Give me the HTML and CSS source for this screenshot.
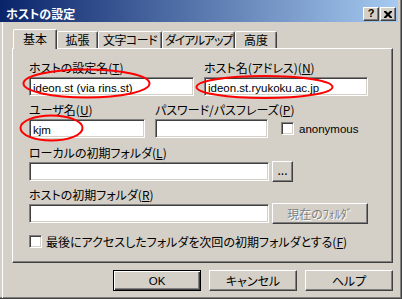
FILE: index.html
```html
<!DOCTYPE html>
<html lang="ja">
<head>
<meta charset="utf-8">
<title>ホストの設定</title>
<link rel="stylesheet" href="styles.css">
</head>
<body>
<div class="win">
  <div class="title">
    <span class="title-text">ホストの設定</span>
    <div class="tbtns">
      <span class="tbtn help">?</span>
      <span class="tbtn"><svg width="8" height="7" viewBox="0 0 8 7"><path d="M0 0h2l2 2 2-2h2v1L5.5 3.5 8 6v1H6L4 5 2 7H0V6l2.5-2.5L0 1z" fill="#000"/></svg></span>
    </div>
  </div>
  <div class="main">
    <div class="tabs">
      <div class="tab active t-basic">基本</div>
      <div class="tab t-ext">拡張</div>
      <div class="tab t-code">文字コード</div>
      <div class="tab t-dial">ダイアルアップ</div>
      <div class="tab t-adv">高度</div>
    </div>
    <div class="panel">
      <div class="row r1">
        <div class="field f-name">
          <div class="label">ホストの設定名(<u>T</u>)</div>
          <div class="ctl"><div class="input"><span class="latin">ideon.st (via rins.st)</span></div></div>
        </div>
        <div class="field f-host">
          <div class="label">ホスト名(アドレス)(<u>N</u>)</div>
          <div class="ctl"><div class="input"><span class="latin">ideon.st.ryukoku.ac.jp</span></div></div>
        </div>
      </div>
      <div class="row r2">
        <div class="field f-user">
          <div class="label">ユーザ名(<u>U</u>)</div>
          <div class="ctl"><div class="input"><span class="latin">kjm</span></div></div>
        </div>
        <div class="field f-pass">
          <div class="label">パスワード/パスフレーズ(<u>P</u>)</div>
          <div class="ctl"><div class="input"></div></div>
        </div>
        <div class="field f-anon">
          <div class="label"></div>
          <div class="ctl"><span class="check"></span><span class="check-label latin">anonymous</span></div>
        </div>
      </div>
      <div class="row r3">
        <div class="field f-wide">
          <div class="label">ローカルの初期フォルダ(<u>L</u>)</div>
          <div class="ctl"><div class="input wide"></div><div class="btn dots">...</div></div>
        </div>
      </div>
      <div class="row r4">
        <div class="field f-wide">
          <div class="label">ホストの初期フォルダ(<u>R</u>)</div>
          <div class="ctl"><div class="input wide"></div><div class="btn cur disabled">現在のﾌｫﾙﾀﾞ</div></div>
        </div>
      </div>
      <div class="row r5">
        <span class="check"></span><span class="check-label">最後にアクセスしたフォルダを次回の初期フォルダとする(<u>F</u>)</span>
      </div>
    </div>
    <div class="buttons">
      <div class="btn big default"><span class="latin">OK</span></div>
      <div class="btn big">キャンセル</div>
      <div class="btn big">ヘルプ</div>
    </div>
  </div>
  <svg class="marks" width="402" height="299" viewBox="0 0 402 299">
    <ellipse cx="86.5" cy="83.5" rx="63" ry="14" />
    <ellipse cx="264.5" cy="87" rx="68" ry="11" />
    <ellipse cx="51.5" cy="128" rx="31" ry="12.5" />
  </svg>
</div>
</body>
</html>
```
FILE: styles.css
```css
* { box-sizing: border-box; }
html, body { margin: 0; padding: 0; }
body {
  width: 402px;
  height: 299px;
  overflow: hidden;
  background: #d4d0c8;
  font-family: "Noto Sans CJK JP", "Noto Sans", sans-serif;
  font-size: 12px;
  color: #000;
  font-feature-settings: "palt";
}
u { text-decoration: underline; text-underline-offset: 1px; }
.latin { font-family: "Liberation Sans", "Noto Sans CJK JP", sans-serif; font-size: 11.5px; }

.win {
  position: relative;
  width: 402px;
  height: 299px;
  background: #d4d0c8;
  border-right: 1px solid #404040;
  border-bottom: 1px solid #404040;
  box-shadow: inset -1px -1px #808080;
  display: flex;
  flex-direction: column;
}

.title {
  width: 398px;
  height: 22px;
  flex: none;
  background: linear-gradient(to right, #0a246a, #a6caf0);
  display: flex;
  align-items: center;
  justify-content: space-between;
  padding: 6px 2px 0 6px;
}
.title-text {
  color: #fff;
  font-weight: bold;
  font-size: 12px;
  line-height: 14px;
}
.tbtns { display: flex; gap: 1px; }
.tbtn {
  width: 16px;
  height: 14px;
  background: #d4d0c8;
  border: 1px solid;
  border-color: #fff #404040 #404040 #fff;
  box-shadow: inset -1px -1px #808080;
  display: flex;
  align-items: center;
  justify-content: center;
}
.tbtn.help {
  font: bold 11px/1 "Liberation Sans", sans-serif;
  padding-bottom: 1px;
}

.main {
  flex: 1;
  margin-left: 2px;
  border-left: 1px solid #fff;
  padding: 7px 8px 0 9px;
  display: flex;
  flex-direction: column;
}

.tabs {
  display: flex;
  align-items: flex-end;
  height: 19px;
  padding-left: 1px;
  position: relative;
  z-index: 1;
}
.tab {
  height: 17px;
  border-top: 1px solid #fff;
  border-left: 1px solid #fff;
  border-right: 1px solid #404040;
  box-shadow: inset -1px 0 #808080;
  border-radius: 2px 2px 0 0;
  display: flex;
  justify-content: center;
  line-height: 15px;
  white-space: nowrap;
  background: #d4d0c8;
  flex: none;
}
.tab.active {
  height: 20px;
  margin-bottom: -1px;
  line-height: 17px;
}
.t-basic { width: 44px; }
.t-ext { width: 41px; }
.t-code { width: 64px; letter-spacing: -0.5px; }
.t-dial { width: 73px; letter-spacing: -1.2px; }
.t-adv { width: 42px; }

.panel {
  width: 381px;
  height: 215px;
  border-top: 1px solid #fff;
  border-left: 1px solid #fff;
  border-right: 1px solid #404040;
  border-bottom: 1px solid #404040;
  box-shadow: inset -1px -1px #808080;
  padding: 12px 0 0 16px;
  display: flex;
  flex-direction: column;
}

.row { display: flex; }
.r2 { margin-top: 7px; }
.r3 { margin-top: 8px; }
.r4 { margin-top: 7px; }
.r5 { margin-top: 11px; align-items: center; height: 14px; }

.field { display: flex; flex-direction: column; }
.label { height: 14px; line-height: 14px; white-space: nowrap; margin-bottom: 2px; }
.ctl { height: 19px; display: flex; align-items: center; }

.f-name { width: 165px; margin-right: 10px; }
.f-host { width: 164px; }
.f-user { width: 116px; margin-right: 10px; }
.f-pass { width: 113px; margin-right: 13px; }

.input {
  width: 100%;
  height: 19px;
  background: #fff;
  border: 1px solid;
  border-color: #808080 #fff #fff #808080;
  box-shadow: inset 1px 1px #404040, inset -1px -1px #d4d0c8;
  padding: 0 3px;
  line-height: 17px;
  white-space: nowrap;
  overflow: hidden;
}
.input.wide { width: 240px; flex: none; }

.btn {
  background: #d4d0c8;
  border: 1px solid;
  border-color: #fff #404040 #404040 #fff;
  box-shadow: inset -1px -1px #808080;
  display: flex;
  align-items: center;
  justify-content: center;
  white-space: nowrap;
  flex: none;
}
.dots { width: 21px; height: 21px; margin-left: 3px; line-height: 1; padding-bottom: 4px; }
.cur { width: 96px; height: 21px; margin-left: 3px; }
.disabled { color: #808080; text-shadow: 1px 1px #fff; }

.check {
  width: 13px;
  height: 13px;
  flex: none;
  background: #fff;
  border: 1px solid;
  border-color: #808080 #fff #fff #808080;
  box-shadow: inset 1px 1px #404040, inset -1px -1px #d4d0c8;
}
.check-label { margin-left: 4px; white-space: nowrap; }
.f-anon .check-label { margin-left: 5px; }

.buttons {
  display: flex;
  justify-content: flex-end;
  gap: 8px;
  margin-top: 7px;
}
.btn.big { width: 88px; height: 21px; }
.btn.default {
  border: 1px solid #000;
  box-shadow: inset 1px 1px #fff, inset -1px -1px #404040, inset -2px -2px #808080;
}

.marks {
  position: absolute;
  left: 0;
  top: 0;
  pointer-events: none;
}
.marks ellipse {
  fill: none;
  stroke: #ff0000;
  stroke-width: 2;
}
```
